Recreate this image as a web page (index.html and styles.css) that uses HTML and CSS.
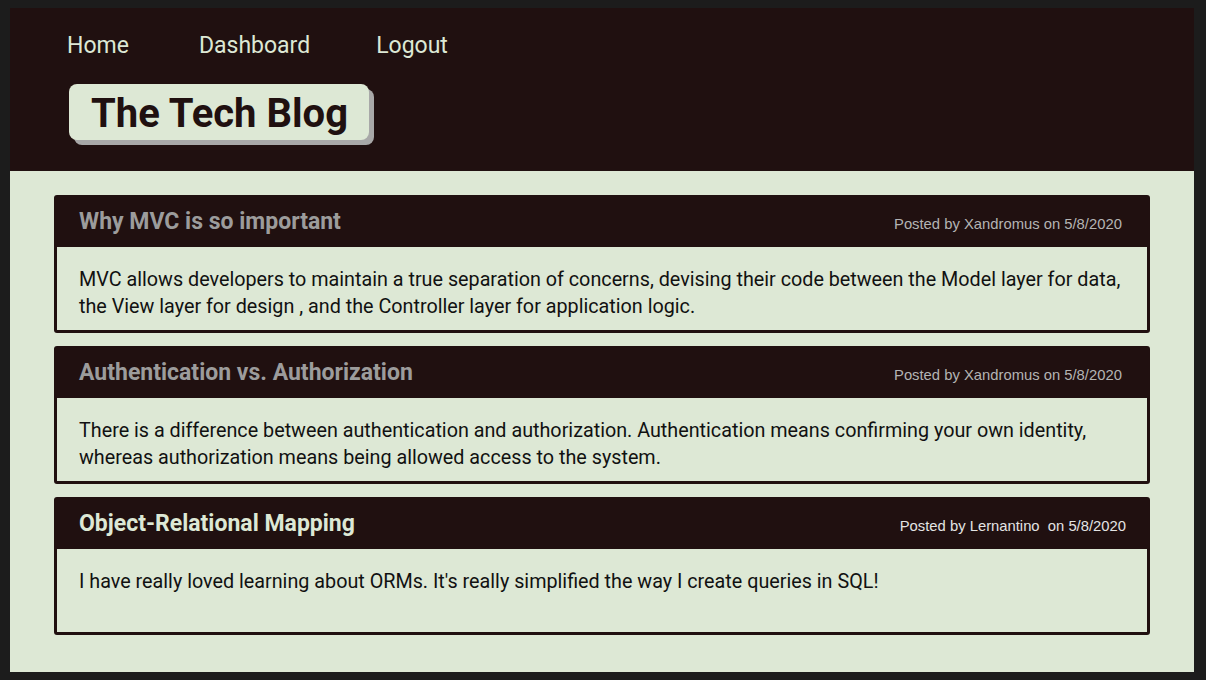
FILE: index.html
```html
<!DOCTYPE html>
<html lang="en">
<head>
<meta charset="utf-8">
<title>The Tech Blog</title>
<link rel="stylesheet" href="styles.css">
</head>
<body>
<div class="page">
  <header class="site-header">
    <nav class="nav">
      <a class="nav-link" href="#">Home</a>
      <a class="nav-link" href="#">Dashboard</a>
      <a class="nav-link" href="#">Logout</a>
    </nav>
    <div class="logo">The Tech Blog</div>
  </header>
  <main class="posts">
    <article class="post post-muted">
      <div class="post-head">
        <h2 class="post-title">Why MVC is so important</h2>
        <span class="post-meta">Posted by Xandromus on 5/8/2020&nbsp;</span>
      </div>
      <div class="post-body">MVC allows developers to maintain a true separation of concerns, devising their code between the Model layer for data, the View layer for design , and the Controller layer for application logic.</div>
    </article>
    <article class="post post-muted">
      <div class="post-head">
        <h2 class="post-title">Authentication vs. Authorization</h2>
        <span class="post-meta">Posted by Xandromus on 5/8/2020&nbsp;</span>
      </div>
      <div class="post-body">There is a difference between authentication and authorization. Authentication means confirming your own identity, whereas authorization means being allowed access to the system.</div>
    </article>
    <article class="post">
      <div class="post-head">
        <h2 class="post-title">Object-Relational Mapping</h2>
        <span class="post-meta">Posted by Lernantino &nbsp;on 5/8/2020</span>
      </div>
      <div class="post-body">I have really loved learning about ORMs. It's really simplified the way I create queries in SQL!</div>
    </article>
  </main>
</div>
</body>
</html>
```

FILE: styles.css
```css
* { box-sizing: border-box; }
html, body { margin: 0; padding: 0; }
body {
  background: #1c1c1c;
  padding: 8px 12px 8px 10px;
  font-family: Roboto, "Liberation Sans", Arial, sans-serif;
}
.page {
  height: 664px;
  background: #dde8d5;
  display: flex;
  flex-direction: column;
}
.site-header {
  background: #201010;
  padding: 23px 0 26px 57px;
  height: 163px;
}
.nav {
  display: flex;
  height: 30px;
  align-items: center;
}
.nav-link {
  color: #dde8d5;
  text-decoration: none;
  font-size: 23px;
  line-height: 30px;
  margin-right: 70px;
}
.nav-link:nth-child(2) { margin-right: 66px; }
.logo {
  margin: 23px 0 0 2px;
  width: 300px;
  height: 56px;
  background: #dde8d5;
  border-radius: 8px;
  box-shadow: 5px 5px 0 #a8a8a8;
  color: #201010;
  font-weight: 700;
  font-size: 40px;
  line-height: 60px;
  padding-left: 22px;
  white-space: nowrap;
}
.posts {
  padding: 24px 44px 0 44px;
  display: flex;
  flex-direction: column;
  gap: 13px;
}
.post {
  border: 3px solid #201010;
  border-radius: 3px;
  background: #201010;
}
.post-head {
  height: 49px;
  display: flex;
  justify-content: space-between;
  align-items: center;
  padding: 0 21px 0 22px;
}
.post-title {
  margin: 0;
  font-size: 23px;
  font-weight: 700;
  color: #dde8d5;
  position: relative;
  top: -1px;
}
.post-meta {
  font-family: "Liberation Sans", Arial, sans-serif;
  font-size: 14.8px;
  color: #e4e4e4;
  white-space: pre;
  position: relative;
  top: 1px;
}
.post-muted .post-title { color: #9c9c9c; }
.post-muted .post-meta { color: #b4b4b4; }
.post-body {
  background: #dde8d5;
  height: 83px;
  padding: 19px 22px 0 22px;
  font-size: 19.75px;
  line-height: 27px;
  color: #111111;
}
```
